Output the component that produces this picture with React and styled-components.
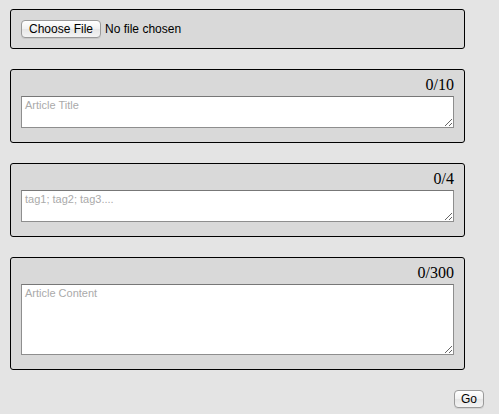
import { useState } from "react";
import styled, { createGlobalStyle } from "styled-components";

const Global = createGlobalStyle`
html, body {
    margin: 0;
    background: #e4e4e4;
}
body {
    font-family: "Liberation Sans", Arial, sans-serif;
}
`;

const Page = styled.form`
padding: 9px 15px 7px 10px;
display: flex;
flex-direction: column;
gap: 20px;
`;

const Panel = styled.div`
box-sizing: border-box;
width: 455px;
background: #d9d9d9;
border: 1px solid #000;
border-radius: 3px;
padding: ${(p) => (p.$plain ? "10px 10px 10px 10px" : "4px 10px 14px 10px")};
display: flex;
flex-direction: column;
`;

const FileRow = styled.div`
display: flex;
align-items: center;
gap: 4px;
height: 18px;
font-size: 12px;
color: #000;
`;

const MacButton = styled.button`
box-sizing: border-box;
height: 18px;
padding: 0 7px;
font-family: "Liberation Sans", Arial, sans-serif;
font-size: 12px;
color: #000;
background: linear-gradient(#ffffff, #f1f1f1 50%, #e6e6e6 51%, #f4f4f4);
border: 1px solid #9a9a9a;
border-radius: 4px;
box-shadow: 0 1px 0 rgba(0, 0, 0, 0.08);
line-height: 16px;
cursor: pointer;
`;

const Counter = styled.div`
font-family: "Liberation Serif", "Times New Roman", serif;
font-size: 16px;
line-height: 22px;
text-align: right;
color: #000;
`;

const Area = styled.textarea`
box-sizing: border-box;
display: block;
width: 433px;
height: ${(p) => p.$h}px;
margin: 0;
padding: 2px 3px;
border: 1px solid #8e8e8e;
border-top-color: #777;
background: #fff;
font-family: "Liberation Sans", Arial, sans-serif;
font-size: 11px;
line-height: 13px;
outline: none;
resize: both;
&::placeholder {
    color: #aaa;
}
`;

const Footer = styled.div`
display: flex;
justify-content: flex-end;
`;

const GoButton = styled(MacButton)`
width: 30px;
height: 18px;
padding: 0;
`;

export default function App() {
    const [titulo, setTitulo] = useState("");
    const [tags, setTags] = useState("");
    const [conteudo, setConteudo] = useState("");

    return (
        <>
            <Global />
            <Page onSubmit={(e) => e.preventDefault()}>
                <Panel $plain>
                    <FileRow>
                        <MacButton type="button">Choose File</MacButton>
                        <span>No file chosen</span>
                    </FileRow>
                </Panel>
                <Panel>
                    <Counter>{titulo.length}/10</Counter>
                    <Area $h={32} placeholder="Article Title" value={titulo} onChange={(e) => setTitulo(e.target.value)} />
                </Panel>
                <Panel>
                    <Counter>{tags.split(";").filter((t) => t.trim()).length}/4</Counter>
                    <Area $h={32} placeholder="tag1; tag2; tag3...." value={tags} onChange={(e) => setTags(e.target.value)} />
                </Panel>
                <Panel>
                    <Counter>{conteudo.length}/300</Counter>
                    <Area $h={71} placeholder="Article Content" value={conteudo} onChange={(e) => setConteudo(e.target.value)} />
                </Panel>
                <Footer>
                    <GoButton type="submit">Go</GoButton>
                </Footer>
            </Page>
        </>
    );
}
